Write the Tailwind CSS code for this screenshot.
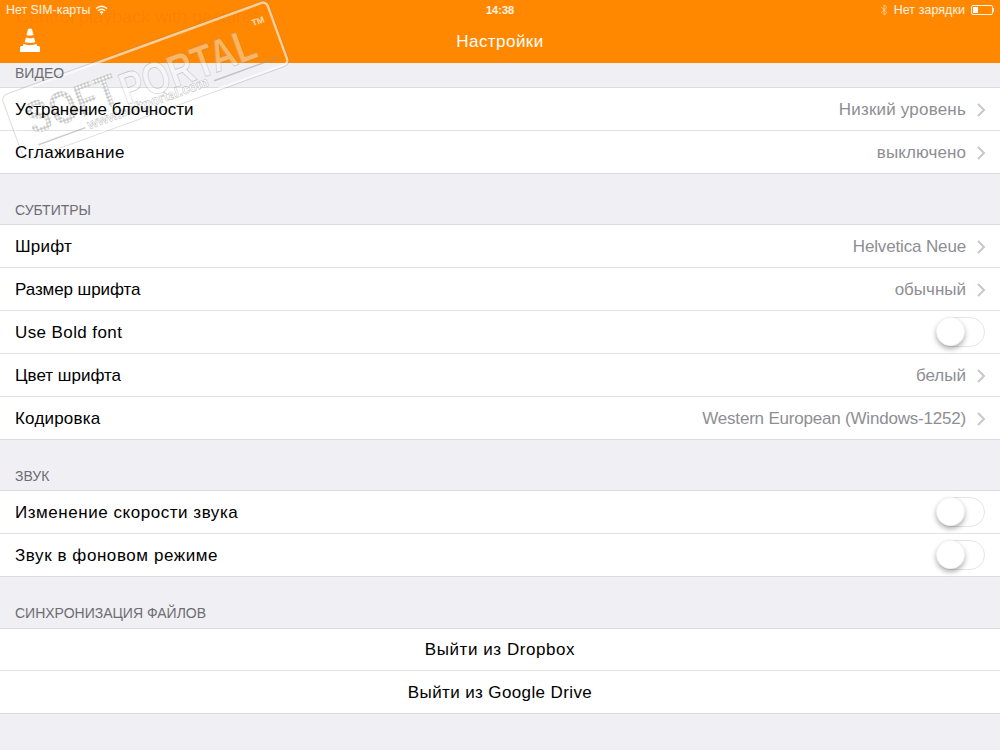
<!DOCTYPE html>
<html><head><meta charset="utf-8"><script src="https://cdn.jsdelivr.net/npm/@tailwindcss/browser@4"></script></head>
<body class="m-0 overflow-hidden">
<div class="relative w-[1000px] h-[750px] overflow-hidden bg-[#efeff4] font-['Liberation_Sans',sans-serif] text-[17px] text-black">
  <header class="h-[63px] bg-[#ff8800] text-white flex flex-col">
    <div class="relative h-[20px] flex items-center justify-between px-[6px] text-[12.4px] text-white/90">
      <div class="flex items-center gap-[5px]"><span>Нет SIM-карты</span>
        <svg width="13" height="10" viewBox="0 0 13 10" fill="none" stroke="white" stroke-width="1.4"><path d="M1 3.6C4.4.6 8.6.6 12 3.6M3 5.7c2.2-1.900 4.800-1.900 7 0M5 7.600c1-.8 2-.8 3 0"/><circle cx="6.500" cy="9" r=".8" fill="white" stroke="none"/></svg></div>
      <span class="absolute left-[486px] font-bold text-[11px]">14:38</span>
      <div class="flex items-center gap-[6px]">
        <svg width="8" height="12" viewBox="0 0 8 12" fill="none" stroke="white" stroke-opacity=".5" stroke-width="1"><path d="M1 3l6 5.500L4 11V1l3 2.500L1 9"/></svg>
        <span class="tracking-[.1px]">Нет зарядки</span>
        <div class="flex items-center"><div class="w-[22px] h-[10px] rounded-[2px] border border-white/90 p-[1px]"><div class="w-[5px] h-full bg-white"></div></div><div class="w-[1px] h-[4px] bg-white/80"></div></div>
      </div>
    </div>
    <div class="relative flex-1 flex items-center justify-center text-[17px] tracking-[.45px]">
      <svg class="absolute left-[20px] top-[8px]" width="20" height="24" viewBox="0 0 20 24" fill="white"><path d="M8 1.200c.8-1 3.200-1 4 0L13.500 7c-1.500.8-5.500.8-7 0zM6 9.500c2 .9 6 .9 8 0l1.300 4.500c-2.500 1.200-8 1.200-10.600 0zM3.500 15.800c3 1.800 10 1.800 13 0l.6 2.200h1.400c.8 0 1.500.7 1.500 1.500V24H0v-4.500C0 18.700.7 18 1.500 18h1.400z"/></svg>
      <span class="pt-[1px]">Настройки</span>
    </div>
  </header>

  <section class="h-[24px] flex items-center px-[15px] text-[14px] text-[#6d6d72] uppercase pb-[4px]"><span class="relative z-10">Видео</span></section>
  <div class="bg-white border-y border-[#dcdce0]">
    <div class="h-[43px] pt-[2px] pl-[15px] pr-[14px] flex items-center justify-between border-b border-[#e2e2e5]"><span class="relative z-10">Устранение блочности</span><span class="flex items-center gap-[11px] text-[#8e8e93]"><span class="tracking-[.2px]">Низкий уровень</span><svg width="9" height="14" viewBox="0 0 9 14" fill="none" stroke="#c7c7cc" stroke-width="2"><path d="M1 1l6 6-6 6"/></svg></span></div>
    <div class="h-[42px] pt-[2px] pl-[15px] pr-[14px] flex items-center justify-between"><span class="relative z-10 tracking-[.45px]">Сглаживание</span><span class="flex items-center gap-[11px] text-[#8e8e93]"><span class="tracking-[.1px]">выключено</span><svg width="9" height="14" viewBox="0 0 9 14" fill="none" stroke="#c7c7cc" stroke-width="2"><path d="M1 1l6 6-6 6"/></svg></span></div>
  </div>

  <section class="h-[50px] flex items-end px-[15px] pb-[3px] text-[14px] text-[#6d6d72] uppercase">Субтитры</section>
  <div class="bg-white border-y border-[#dcdce0]">
    <div class="h-[43px] pt-[2px] pl-[15px] pr-[14px] flex items-center justify-between border-b border-[#e2e2e5]"><span class="tracking-[.2px]">Шрифт</span><span class="flex items-center gap-[11px] text-[#8e8e93]"><span class="tracking-[-.15px]">Helvetica Neue</span><svg width="9" height="14" viewBox="0 0 9 14" fill="none" stroke="#c7c7cc" stroke-width="2"><path d="M1 1l6 6-6 6"/></svg></span></div>
    <div class="h-[43px] pt-[2px] pl-[15px] pr-[14px] flex items-center justify-between border-b border-[#e2e2e5]"><span class="tracking-[-.08px]">Размер шрифта</span><span class="flex items-center gap-[11px] text-[#8e8e93]">обычный<svg width="9" height="14" viewBox="0 0 9 14" fill="none" stroke="#c7c7cc" stroke-width="2"><path d="M1 1l6 6-6 6"/></svg></span></div>
    <div class="h-[43px] pl-[15px] pr-[15px] flex items-center justify-between border-b border-[#e2e2e5]"><span class="pt-[2px] tracking-[.4px]">Use Bold font</span><div class="relative w-[49px] h-[30px] rounded-full border-[1.5px] border-[#e5e5e5] bg-white"><div class="absolute -left-[1px] -top-[1px] w-[29px] h-[29px] rounded-full bg-white border border-black/5 shadow-[0_3px_5px_rgba(0,0,0,0.3)]"></div></div></div>
    <div class="h-[43px] pt-[2px] pl-[15px] pr-[14px] flex items-center justify-between border-b border-[#e2e2e5]"><span>Цвет шрифта</span><span class="flex items-center gap-[11px] text-[#8e8e93]">белый<svg width="9" height="14" viewBox="0 0 9 14" fill="none" stroke="#c7c7cc" stroke-width="2"><path d="M1 1l6 6-6 6"/></svg></span></div>
    <div class="h-[42px] pt-[2px] pl-[15px] pr-[14px] flex items-center justify-between"><span class="tracking-[.2px]">Кодировка</span><span class="flex items-center gap-[11px] text-[#8e8e93]"><span class="tracking-[-.2px]">Western European (Windows-1252)</span><svg width="9" height="14" viewBox="0 0 9 14" fill="none" stroke="#c7c7cc" stroke-width="2"><path d="M1 1l6 6-6 6"/></svg></span></div>
  </div>

  <section class="h-[50px] flex items-end px-[15px] pb-[3px] text-[14px] text-[#6d6d72] uppercase">Звук</section>
  <div class="bg-white border-y border-[#dcdce0]">
    <div class="h-[43px] pl-[15px] pr-[15px] flex items-center justify-between border-b border-[#e2e2e5]"><span class="pt-[2px] tracking-[.54px]">Изменение скорости звука</span><div class="relative w-[49px] h-[30px] rounded-full border-[1.5px] border-[#e5e5e5] bg-white"><div class="absolute -left-[1px] -top-[1px] w-[29px] h-[29px] rounded-full bg-white border border-black/5 shadow-[0_3px_5px_rgba(0,0,0,0.3)]"></div></div></div>
    <div class="h-[42px] pl-[15px] pr-[15px] flex items-center justify-between"><span class="pt-[2px] tracking-[.57px]">Звук в фоновом режиме</span><div class="relative w-[49px] h-[30px] rounded-full border-[1.5px] border-[#e5e5e5] bg-white"><div class="absolute -left-[1px] -top-[1px] w-[29px] h-[29px] rounded-full bg-white border border-black/5 shadow-[0_3px_5px_rgba(0,0,0,0.3)]"></div></div></div>
  </div>

  <section class="h-[51px] flex items-end px-[15px] pb-[4px] text-[14px] text-[#6d6d72] uppercase">Синхронизация файлов</section>
  <div class="bg-white border-y border-[#dcdce0]">
    <div class="h-[42px] flex items-center justify-center border-b border-[#e2e2e5] tracking-[.56px]">Выйти из Dropbox</div>
    <div class="h-[42px] pt-[2px] flex items-center justify-center tracking-[.38px]">Выйти из Google Drive</div>
  </div>

  <div class="absolute left-[16px] top-[4px] text-[18px] text-black/[0.05] pointer-events-none whitespace-nowrap">Control playback with gestures</div>

  <svg class="absolute left-0 top-0 z-[5] pointer-events-none" width="300" height="180" viewBox="0 0 300 180" font-family="Liberation Sans, sans-serif">
    <defs>
      <pattern id="dots" width="3.500" height="3.500" patternUnits="userSpaceOnUse"><rect width="3.500" height="3.500" fill="#c4c4c4"/><circle cx="1.750" cy="1.750" r="1.350" fill="white"/></pattern>
    </defs>
    <g transform="rotate(-20 3 97)">
      <rect x="3" y="97" width="280" height="66" rx="5" fill="none" stroke="white" stroke-opacity=".6" stroke-width="2.500"/>
      <rect x="1.500" y="95.500" width="283" height="69" rx="6" fill="none" stroke="#777" stroke-opacity=".25" stroke-width="1"/>
      <text x="116" y="147" font-size="45" font-weight="bold" textLength="142" lengthAdjust="spacingAndGlyphs" fill="white" fill-opacity=".4" stroke="#777" stroke-opacity=".4" stroke-width=".7">PORTAL</text>
      <text x="18" y="143" font-size="46" font-weight="bold" textLength="95" lengthAdjust="spacingAndGlyphs" fill="url(#dots)">SOFT</text>
      <text x="73" y="157" font-size="14" font-weight="bold" textLength="128" lengthAdjust="spacingAndGlyphs" fill="white" fill-opacity=".9" stroke="#777" stroke-opacity=".55" stroke-width=".45">www.softportal.com</text>
      <text x="262" y="116" font-size="9" font-weight="bold" fill="white" fill-opacity=".7">TM</text>
      <path d="M20 154h50M207 154h68" stroke="#999" stroke-opacity=".5" stroke-width="1.500" fill="none"/>
    </g>
  </svg>
</div>
</body></html>
